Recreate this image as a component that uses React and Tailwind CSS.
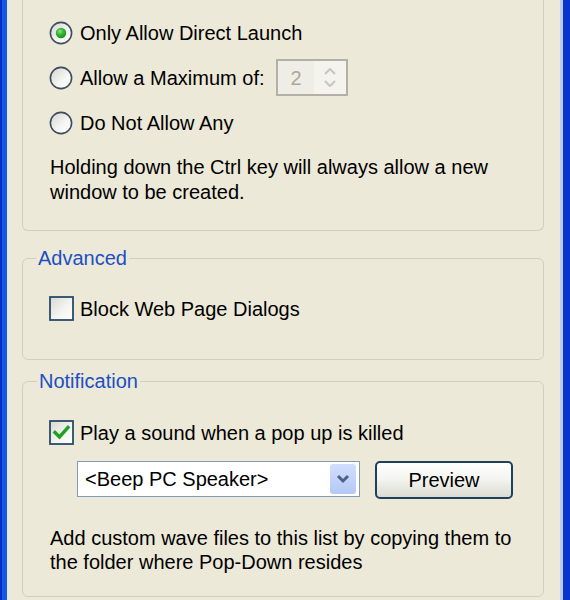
const FONT = "font-['Liberation_Sans',Arial,sans-serif]";

function Radio({ id, checked }) {
  return (
    <svg width="24" height="24" viewBox="0 0 24 24" className="shrink-0">
      <defs>
        <linearGradient id={`rf-${id}`} x1="0" y1="0" x2="1" y2="1">
          <stop offset="0" stopColor="#d6d5cc" />
          <stop offset="0.6" stopColor="#f6f6f3" />
          <stop offset="1" stopColor="#ffffff" />
        </linearGradient>
        <radialGradient id={`rd-${id}`} cx="0.4" cy="0.35" r="0.7">
          <stop offset="0" stopColor="#8ae08a" />
          <stop offset="0.5" stopColor="#2fb52f" />
          <stop offset="1" stopColor="#178a17" />
        </radialGradient>
      </defs>
      <circle cx="12" cy="12" r="10.6" fill={`url(#rf-${id})`} stroke="#3d4d5e" strokeWidth="1.6" />
      {checked && <circle cx="12" cy="12" r="5.2" fill={`url(#rd-${id})`} />}
    </svg>
  );
}

function Check({ id, checked }) {
  return (
    <svg width="25" height="25" viewBox="0 0 25 25" className="shrink-0">
      <defs>
        <linearGradient id={`cf-${id}`} x1="0" y1="0" x2="1" y2="1">
          <stop offset="0" stopColor="#d9d8ce" />
          <stop offset="0.55" stopColor="#f4f4f0" />
          <stop offset="1" stopColor="#ffffff" />
        </linearGradient>
      </defs>
      <rect x="1" y="1" width="23" height="23" fill={`url(#cf-${id})`} stroke="#2a4a6c" strokeWidth="1.8" />
      {checked && (
        <path d="M6 12.5 L10.5 17 L19 7.5" fill="none" stroke="#21a121" strokeWidth="3.4" strokeLinejoin="miter" strokeLinecap="square" />
      )}
    </svg>
  );
}

function RadioRow({ id, checked, children }) {
  return (
    <div className="flex h-[45px] items-center">
      <Radio id={id} checked={checked} />
      <span className="ml-[7px]">{children}</span>
    </div>
  );
}

function Spinner() {
  return (
    <div className="ml-[11px] flex h-[37px] w-[72px] border-2 border-[#b3b1a6] bg-[#efeee6]">
      <div className="flex flex-1 items-center pl-[13px] text-[#aca899]">2</div>
      <div className="flex w-[32px] flex-col items-center justify-center gap-[5px] bg-[#f4f3ee]">
        <svg width="12" height="7" viewBox="0 0 12 7">
          <path d="M1 6 L6 1 L11 6" fill="none" stroke="#c9c8c0" strokeWidth="2.2" />
        </svg>
        <svg width="12" height="7" viewBox="0 0 12 7">
          <path d="M1 1 L6 6 L11 1" fill="none" stroke="#c9c8c0" strokeWidth="2.2" />
        </svg>
      </div>
    </div>
  );
}

function Combo() {
  return (
    <div className="flex h-[36px] w-[283px] items-center border-[1.5px] border-[#7f9db9] bg-white pr-[3px]">
      <span className="flex-1 pl-[7px]">&lt;Beep PC Speaker&gt;</span>
      <div className="flex h-[30px] w-[26px] items-center justify-center rounded-[3px] bg-gradient-to-b from-[#d2defc] to-[#b4c8f6]">
        <svg width="14" height="10" viewBox="0 0 14 10">
          <path d="M2 2 L7 7 L12 2" fill="none" stroke="#4d6185" strokeWidth="3" />
        </svg>
      </div>
    </div>
  );
}

function Button({ children }) {
  return (
    <div className="ml-[15px] flex h-[38px] w-[138px] items-center justify-center rounded-[5px] border-2 border-[#1e3f5e] bg-gradient-to-b from-[#ffffff] via-[#f3f3ef] to-[#dcdcd4]">
      {children}
    </div>
  );
}

export default function App() {
  return (
    <div className={`flex h-[600px] w-[570px] overflow-hidden bg-[#ece9d8] text-[20px] leading-[24px] text-black ${FONT}`}>
      <div className="w-[7px] shrink-0 border-l-2 border-[#0a2bc4] bg-[#1458e6]" />
      <div className="flex min-w-0 flex-1 flex-col pl-[15px] pr-[16px]">
        <div className="box-border h-[231px] rounded-b-[6px] border-x border-b border-[#d0d0bf] pl-[26px] pt-[10px]">
          <RadioRow id="a" checked>Only Allow Direct Launch</RadioRow>
          <div className="flex h-[45px] items-center">
            <Radio id="b" />
            <span className="ml-[7px]">Allow a Maximum of:</span>
            <Spinner />
          </div>
          <RadioRow id="c">Do Not Allow Any</RadioRow>
          <p className="ml-[1px] mt-[10px] leading-[25px]">
            Holding down the Ctrl key will always allow a new
            <br />
            window to be created.
          </p>
        </div>

        <fieldset className="mt-[15px] rounded-[6px] border border-[#d0d0bf] px-0 pb-[38px]">
          <legend className="ml-[13px] px-[2px] text-[#1c4fc4]">Advanced</legend>
          <div className="mt-[26px] flex h-[25px] items-center pl-[26px]">
            <Check id="d" />
            <span className="ml-[6px]">Block Web Page Dialogs</span>
          </div>
        </fieldset>

        <fieldset className="mt-[9px] rounded-[6px] border border-[#d0d0bf] px-0 pb-[22px]">
          <legend className="ml-[14px] px-[2px] text-[#1c4fc4]">Notification</legend>
          <div className="pl-[26px]">
            <div className="mt-[27px] flex h-[25px] items-center">
              <Check id="e" checked />
              <span className="ml-[6px]">Play a sound when a pop up is killed</span>
            </div>
            <div className="ml-[28px] mt-[16px] flex items-start">
              <Combo />
              <Button>Preview</Button>
            </div>
            <p className="ml-[1px] mt-[27px] leading-[24px]">
              Add custom wave files to this list by copying them to
              <br />
              the folder where Pop-Down resides
            </p>
          </div>
        </fieldset>
      </div>
      <div className="flex w-[10px] shrink-0">
        <div className="w-[3px] bg-[#b8ccf4]" />
        <div className="flex-1 bg-[#0a34cc]" />
      </div>
    </div>
  );
}
